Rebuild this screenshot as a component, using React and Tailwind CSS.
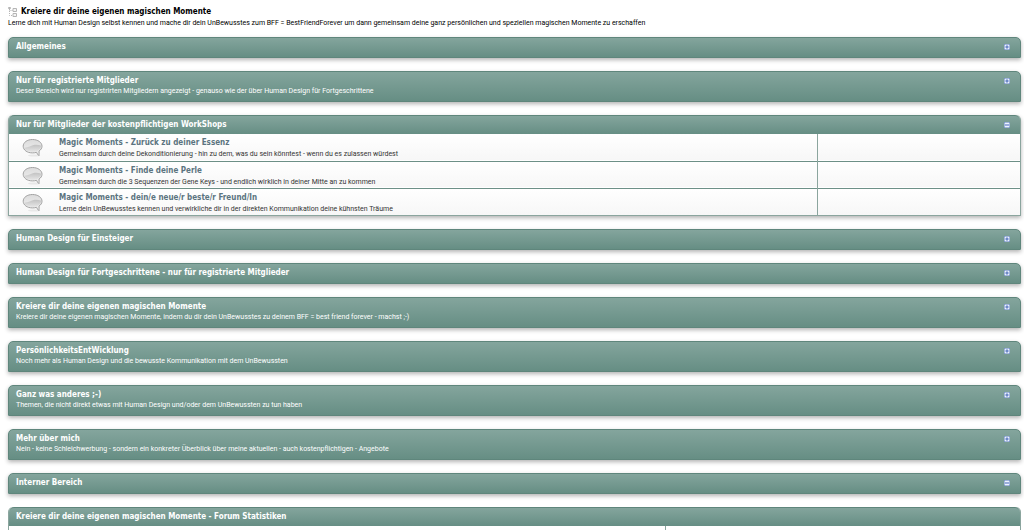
import { useState } from "react";

const categories = [
    { title: "Allgemeines" },
    {
        title: "Nur für registrierte Mitglieder",
        description:
            "Deser Bereich wird nur registrirten Mitgliedern angezeigt - genauso wie der über Human Design für Fortgeschrittene",
    },
    {
        title: "Nur für Mitglieder der kostenpflichtigen WorkShops",
        expanded: true,
        forums: [
            {
                title: "Magic Moments - Zurück zu deiner Essenz",
                description:
                    "Gemeinsam durch deine Dekonditionierung - hin zu dem, was du sein könntest - wenn du es zulassen würdest",
            },
            {
                title: "Magic Moments - Finde deine Perle",
                description:
                    "Gemeinsam durch die 3 Sequenzen der Gene Keys - und endlich wirklich in deiner Mitte an zu kommen",
            },
            {
                title: "Magic Moments - dein/e neue/r beste/r Freund/In",
                description:
                    "Lerne dein UnBewusstes kennen und verwirkliche dir in der direkten Kommunikation deine kühnsten Träume",
            },
        ],
    },
    { title: "Human Design für Einsteiger" },
    { title: "Human Design für Fortgeschrittene - nur für registrierte Mitglieder" },
    {
        title: "Kreiere dir deine eigenen magischen Momente",
        description:
            "Kreiere dir deine eigenen magischen Momente, indem du dir dein UnBewusstes zu deinem BFF = best friend forever - machst ;-)",
    },
    {
        title: "PersönlichkeitsEntWicklung",
        description: "Noch mehr als Human Design und die bewusste Kommunikation mit dem UnBewussten",
    },
    {
        title: "Ganz was anderes ;-)",
        description: "Themen, die nicht direkt etwas mit Human Design und/oder dem UnBewussten zu tun haben",
    },
    {
        title: "Mehr über mich",
        description:
            "Nein - keine Schleichwerbung - sondern ein konkreter Überblick über meine aktuellen - auch kostenpflichtigen - Angebote",
    },
    { title: "Interner Bereich", expanded: true },
];

const IndexIcon = () => (
    <svg width="10" height="12" viewBox="0 0 10 12" fill="none" stroke="#b5b5b5" aria-hidden="true">
        <path d="M1.5 1v8.5h3M1.5 4.5h3" strokeDasharray="1 1" />
        <path d="M.5 1.500h2v1h-2z" />
        <path d="M5 2.500h3.500v3H5zM5 7.500h3.500v3H5z" fill="#f5f5f5" />
    </svg>
);

const BubbleIcon = () => (
    <svg width="22" height="20" viewBox="0 0 22 20" aria-hidden="true">
        <defs>
            <linearGradient id="bubble" x1="0" y1="0" x2="0" y2="1">
                <stop offset="0" stopColor="#dcdcdc" />
                <stop offset="1" stopColor="#f2f2f2" />
            </linearGradient>
            <linearGradient id="shade" x1="0" y1="0" x2="0" y2="1">
                <stop offset="0" stopColor="#c2c2c2" />
                <stop offset="1" stopColor="#e6e6e6" />
            </linearGradient>
        </defs>
        <ellipse cx="12" cy="17.500" rx="6" ry="1" fill="#e8e8e8" />
        <path
            d="M10.500 1.500C5.200 1.500 1.200 4.400 1.200 8.200s4 6.700 9.300 6.700c1.500 0 2.900-.2 4.100-.6.400 1.400 1.100 2.400 2.300 3.300.3-1.600.2-3.200.1-4.500 1.800-1.200 3-2.900 3-4.900 0-3.800-4.200-6.700-9.500-6.700z"
            fill="url(#bubble)"
            stroke="#a2a2a2"
        />
        <path
            d="M2.200 9.800c4.300 0 6.800-2.500 10.300-3 2.700-.3 5 .1 6.800 1-.2 3.700-4 6.200-8.700 6.200-4.200 0-7.600-1.800-8.400-4.200z"
            fill="url(#shade)"
        />
    </svg>
);

const ToggleIcon = ({ expanded }) => (
    <svg width="6" height="6" viewBox="0 0 6 6" aria-hidden="true">
        <path d="M0 0h6v6H0z" fill="#5577b5" />
        <path d="M.5 .5h5v5h-5z" fill="#eef4ff" />
        <path d={expanded ? "M1 2.500h4v1H1z" : "M1.300 2.500h3.400v1H1.300zM2.500 1.300h1v3.400h-1z"} fill="#4465b8" />
    </svg>
);

const CategoryBar = ({ title, description, expanded, onToggle, open }) => (
    <div
        className={`flex items-start justify-between rounded-t-[5px] border-[#5f867c] bg-linear-to-b from-[#84a59d] to-[#668e84] px-[7px] pt-[3px] text-white ${
            open ? "h-[19px] border-t" : description ? "h-[31px] border" : "h-[21px] border"
        }`}
    >
        <div>
            <h2 className="text-[8px] leading-[12px] font-bold">
                <a href="#">{title}</a>
            </h2>
            {description && <p className="font-[Roboto,sans-serif] text-[7px] leading-[8px]">{description}</p>}
        </div>
        {onToggle && (
            <button
                type="button"
                onClick={onToggle}
                aria-expanded={expanded}
                aria-label={title}
                className="mt-[3px] mr-[3px]"
            >
                <ToggleIcon expanded={expanded} />
            </button>
        )}
    </div>
);

const ForumTable = ({ forums }) => (
    <table className="w-full table-fixed border-collapse">
        <colgroup>
            <col className="w-12" />
            <col />
            <col className="w-1/5" />
        </colgroup>
        <tbody>
            {forums.map((forum) => (
                <tr
                    key={forum.title}
                    className="h-[27px] border-b border-[#6d9087] bg-linear-to-b from-white to-[#f7f7f7] last:border-b-0"
                >
                    <td className="pt-[2px] pl-[13px]">
                        <BubbleIcon />
                    </td>
                    <td className="border-r border-[#8ba59e] pt-[2px] pl-[2px]">
                        <h3 className="text-[8px] leading-[12px] font-bold text-[#5b7480]">
                            <a href="#">{forum.title}</a>
                        </h3>
                        <p className="font-[Roboto,sans-serif] text-[7px] leading-[10px] text-[#333]">
                            {forum.description}
                        </p>
                    </td>
                    <td></td>
                </tr>
            ))}
        </tbody>
    </table>
);

const Category = ({ category }) => {
    const [expanded, setExpanded] = useState(Boolean(category.expanded));
    const open = expanded && Boolean(category.forums);

    return (
        <section
            className={`rounded-t-[5px] shadow-[0_2px_4px_rgba(0,0,0,0.3)] ${open ? "border border-t-0 border-[#8ba59e]" : ""}`}
        >
            <CategoryBar {...category} open={open} expanded={expanded} onToggle={() => setExpanded(!expanded)} />
            {open && <ForumTable forums={category.forums} />}
        </section>
    );
};

const App = () => {
    return (
        <div className="h-screen overflow-hidden bg-white font-['DejaVu_Sans_Condensed','DejaVu_Sans',sans-serif]">
            <header className="px-2 pt-[6px] text-black">
                <div className="flex items-center gap-[3px]">
                    <IndexIcon />
                    <h1 className="text-[8px] leading-[12px] font-bold">Kreiere dir deine eigenen magischen Momente</h1>
                </div>
                <p className="font-[Roboto,sans-serif] text-[7px] leading-[10px]">
                    Lerne dich mit Human Design selbst kennen und mache dir dein UnBewusstes zum BFF = BestFriendForever um
                    dann gemeinsam deine ganz persönlichen und speziellen magischen Momente zu erschaffen
                </p>
            </header>

            <main className="flex flex-col gap-[13px] pt-[9px] pr-[3px] pl-2">
                {categories.map((category) => (
                    <Category key={category.title} category={category} />
                ))}

                <section className="rounded-t-[5px] border border-t-0 border-[#8ba59e]">
                    <CategoryBar title="Kreiere dir deine eigenen magischen Momente - Forum Statistiken" open />
                    <div className="flex">
                        <div className="h-10 w-[65%] border-r border-[#8ba59e]"></div>
                    </div>
                </section>
            </main>
        </div>
    );
};

export default App;
